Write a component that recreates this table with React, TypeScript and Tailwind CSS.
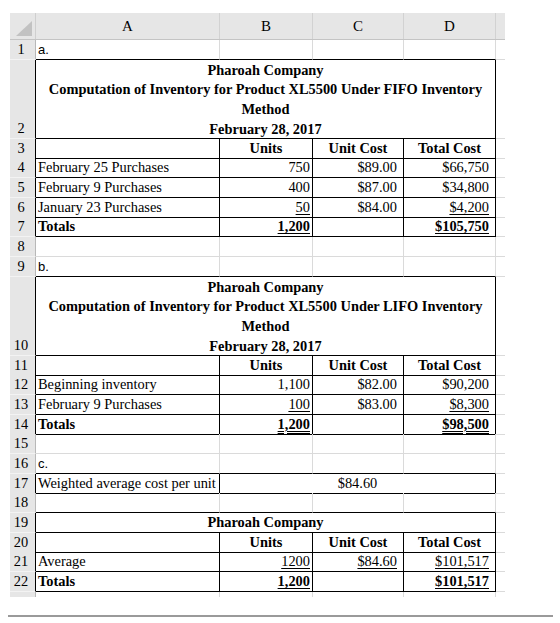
import type { ReactNode } from "react";
import clsx from "clsx";

type C = { t?: ReactNode; span?: 1 | 3 | 4; r?: boolean; b?: boolean; cls?: string };

const GRID = "grid grid-cols-[26px_184px_93px_91px_92px_9px]";
const L = "pl-[2px]";
const N = "justify-end pr-[2px]";
const M = "justify-end pr-[6px]";
const H = "justify-center font-bold";

const U = ({ children }: { children: ReactNode }) => (
  <span className="underline underline-offset-[2px] decoration-1">{children}</span>
);
const UU = ({ children }: { children: ReactNode }) => (
  <span className="font-bold underline decoration-double underline-offset-[2px]">{children}</span>
);
const Sans = ({ children }: { children: ReactNode }) => (
  <span className="font-['Liberation_Sans',sans-serif] text-[13px]">{children}</span>
);

function Cell({ c }: { c: C }) {
  return (
    <div
      className={clsx(
        "flex items-end whitespace-nowrap border-r border-b leading-[19px]",
        c.span === 4 && "col-span-4",
        c.span === 3 && "col-span-3",
        c.r ? "border-r-black" : "border-r-[#dadada]",
        c.b ? "border-b-black" : "border-b-[#dadada]",
        c.cls
      )}
    >
      {c.t}
    </div>
  );
}

function Row({ n, h = "h-[19.7px]", left = false, cells }: { n: number; h?: string; left?: boolean; cells: C[] }) {
  return (
    <div className={clsx(GRID, h)}>
      <div
        className={clsx(
          "flex items-end justify-center bg-[#e6e6e6] border-b border-b-[#f3f3f3] border-r pr-[3px] leading-[19px]",
          left ? "border-r-black" : "border-r-[#b8b8b8]"
        )}
      >
        {n}
      </div>
      {cells.map((c, i) => (
        <Cell key={i} c={c} />
      ))}
      <div className="border-b border-b-[#dadada]" />
    </div>
  );
}

const empty: C[] = [{}, {}, {}, {}];
const under: C[] = [{ b: true }, { b: true }, { b: true }, { b: true }];
const box = (a: C, b: C, c: C, d: C): C[] => [
  { r: true, b: true, cls: L, ...a },
  { r: true, b: true, cls: N, ...b },
  { r: true, b: true, cls: M, ...c },
  { r: true, b: true, cls: M, ...d },
];
const heads = box({}, { t: "Units", cls: H }, { t: "Unit Cost", cls: H }, { t: "Total Cost", cls: H });

function Title({ lines }: { lines: string[] }) {
  return (
    <div className="flex w-full flex-col items-center font-bold">
      {lines.map((l) => (
        <span key={l} className="h-[19.7px] leading-[20px]">
          {l}
        </span>
      ))}
    </div>
  );
}

export default function App() {
  const cols = ["A", "B", "C", "D"];
  return (
    <div className="min-h-[623px] bg-white pt-[13px] font-['Liberation_Serif',serif] text-[14.4px] text-black">
      <div className="ml-[10px] w-[495px]">
        <div className={clsx(GRID, "h-[27px] bg-[#e6e6e6] border-b border-b-[#c4c4c4]")}>
          <div className="flex items-end justify-end border-r border-r-[#cfcfcf] pb-[3px] pr-[3px]">
            <svg width="16" height="15" viewBox="0 0 16 15">
              <polygon points="16,0 16,15 0,15" fill="#c2c2c2" />
            </svg>
          </div>
          {cols.map((c) => (
            <div key={c} className="flex items-center justify-center border-r border-r-[#d2d2d2] text-[15px]">
              {c}
            </div>
          ))}
          <div />
        </div>

        <Row n={1} cells={[{ t: <Sans>a.</Sans>, b: true, cls: L }, { b: true }, { b: true }, { b: true }]} />
        <Row
          n={2}
          h="h-[79px]"
          left
          cells={[
            {
              span: 4,
              r: true,
              b: true,
              t: (
                <Title
                  lines={[
                    "Pharoah Company",
                    "Computation of Inventory for Product XL5500 Under FIFO Inventory",
                    "Method",
                    "February 28, 2017",
                  ]}
                />
              ),
            },
          ]}
        />
        <Row n={3} left cells={heads} />
        <Row n={4} left cells={box({ t: "February 25 Purchases" }, { t: "750" }, { t: "$89.00" }, { t: "$66,750" })} />
        <Row n={5} left cells={box({ t: "February 9 Purchases" }, { t: "400" }, { t: "$87.00" }, { t: "$34,800" })} />
        <Row
          n={6}
          left
          cells={box({ t: "January 23 Purchases" }, { t: <U>50</U> }, { t: "$84.00" }, { t: <U>$4,200</U> })}
        />
        <Row
          n={7}
          left
          cells={box({ t: "Totals", cls: L + " font-bold" }, { t: <UU>1,200</UU> }, {}, { t: <UU>$105,750</UU> })}
        />
        <Row n={8} cells={empty} />
        <Row n={9} cells={[{ t: <Sans>b.</Sans>, b: true, cls: L }, { b: true }, { b: true }, { b: true }]} />
        <Row
          n={10}
          h="h-[79px]"
          left
          cells={[
            {
              span: 4,
              r: true,
              b: true,
              t: (
                <Title
                  lines={[
                    "Pharoah Company",
                    "Computation of Inventory for Product XL5500 Under LIFO Inventory",
                    "Method",
                    "February 28, 2017",
                  ]}
                />
              ),
            },
          ]}
        />
        <Row n={11} left cells={heads} />
        <Row n={12} left cells={box({ t: "Beginning inventory" }, { t: "1,100" }, { t: "$82.00" }, { t: "$90,200" })} />
        <Row
          n={13}
          left
          cells={box({ t: "February 9 Purchases" }, { t: <U>100</U> }, { t: "$83.00" }, { t: <U>$8,300</U> })}
        />
        <Row
          n={14}
          left
          cells={box({ t: "Totals", cls: L + " font-bold" }, { t: <UU>1,200</UU> }, {}, { t: <UU>$98,500</UU> })}
        />
        <Row n={15} cells={empty} />
        <Row n={16} cells={[{ t: <Sans>c.</Sans>, b: true, cls: L }, { b: true }, { b: true }, { b: true }]} />
        <Row
          n={17}
          left
          cells={[
            { t: "Weighted average cost per unit", r: true, b: true, cls: L },
            { t: "$84.60", span: 3, r: true, b: true, cls: "justify-center" },
          ]}
        />
        <Row n={18} cells={under} />
        <Row n={19} left cells={[{ span: 4, r: true, b: true, t: "Pharoah Company", cls: "justify-center font-bold" }]} />
        <Row n={20} left cells={heads} />
        <Row
          n={21}
          left
          cells={box({ t: "Average" }, { t: <U>1200</U> }, { t: <U>$84.60</U> }, { t: <U>$101,517</U> })}
        />
        <Row
          n={22}
          left
          cells={box({ t: "Totals", cls: L + " font-bold" }, { t: <UU>1,200</UU> }, {}, { t: <UU>$101,517</UU> })}
        />
        <div className={clsx(GRID, "h-[5px]")}>
          <div className="bg-[#e6e6e6] border-r border-r-[#b8b8b8]" />
          <div className="border-r border-r-[#dadada]" />
          <div className="border-r border-r-[#dadada]" />
          <div className="border-r border-r-[#dadada]" />
          <div className="border-r border-r-[#dadada]" />
          <div />
        </div>
      </div>
      <div className="ml-[8px] mt-[18px] h-[2px] w-[545px] bg-[#9a9a9a]" />
    </div>
  );
}
